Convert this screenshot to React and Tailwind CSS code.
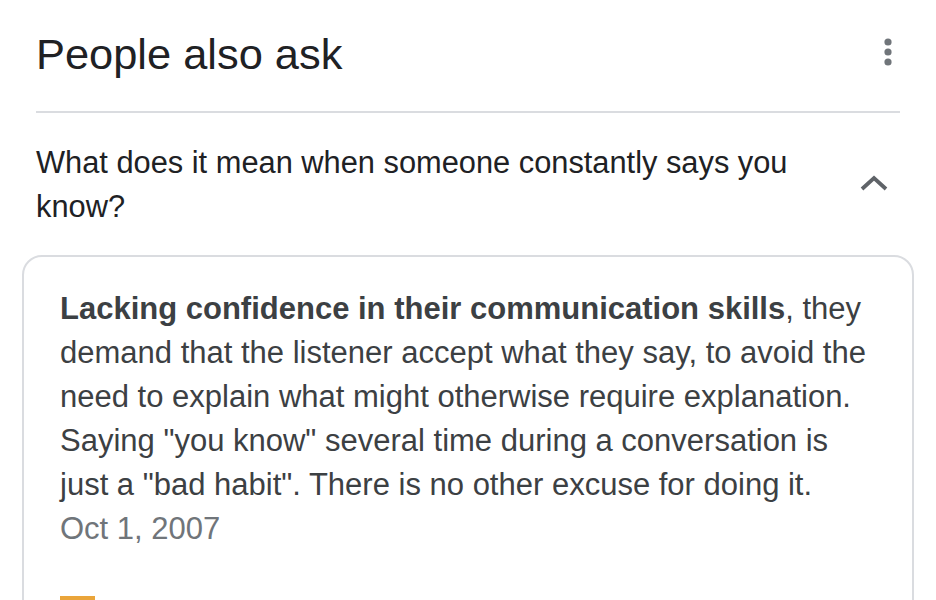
import React from "react";

export default function App() {
  const font = { fontFamily: '"Liberation Sans", Arial, sans-serif' };
  return (
    <div className="w-[936px] h-[600px] overflow-hidden bg-white" style={font}>
      {/* Header */}
      <div className="flex items-start justify-between pl-[36px] pr-[36px] pt-[28px]">
        <h2 className="text-[43.4px] leading-[52px] text-[#202124] font-normal">People also ask</h2>
        <svg width="10" height="30" viewBox="0 0 10 30" className="mt-[9px] mr-[7px]">
          <circle cx="5" cy="5" r="3.6" fill="#70757a" />
          <circle cx="5" cy="15" r="3.6" fill="#70757a" />
          <circle cx="5" cy="25" r="3.6" fill="#70757a" />
        </svg>
      </div>
      <div className="mx-[36px] mt-[31px] h-[2px] bg-[#dadce0]" />

      {/* Question */}
      <div className="flex items-center justify-between pl-[36px] pr-[48px] pt-[28px]">
        <div className="text-[30.8px] leading-[44px] text-[#202124]">
          What does it mean when someone constantly says you
          <br />
          know?
        </div>
        <svg width="28" height="16" viewBox="0 0 28 16" className="mt-[-4px]">
          <path d="M2 14 L14 3 L26 14" fill="none" stroke="#5f6368" strokeWidth="3.8" />
        </svg>
      </div>

      {/* Answer card */}
      <div className="ml-[22px] w-[892px] mt-[26px] h-[400px] rounded-[20px] border-2 border-[#dadce0] pl-[36px] pt-[30px]">
        <div className="text-[31px] leading-[44px] text-[#3c4043] whitespace-nowrap">
          <div>
            <b className="font-bold">Lacking confidence in their communication skills</b>, they
          </div>
          <div>demand that the listener accept what they say, to avoid the</div>
          <div>need to explain what might otherwise require explanation.</div>
          <div>Saying "you know" several time during a conversation is</div>
          <div>just a "bad habit". There is no other excuse for doing it.</div>
          <div className="text-[#70757a]">Oct 1, 2007</div>
        </div>
        <div className="mt-[45px] w-[35px] h-[20px] bg-[#eaa53a]" />
      </div>
    </div>
  );
}
